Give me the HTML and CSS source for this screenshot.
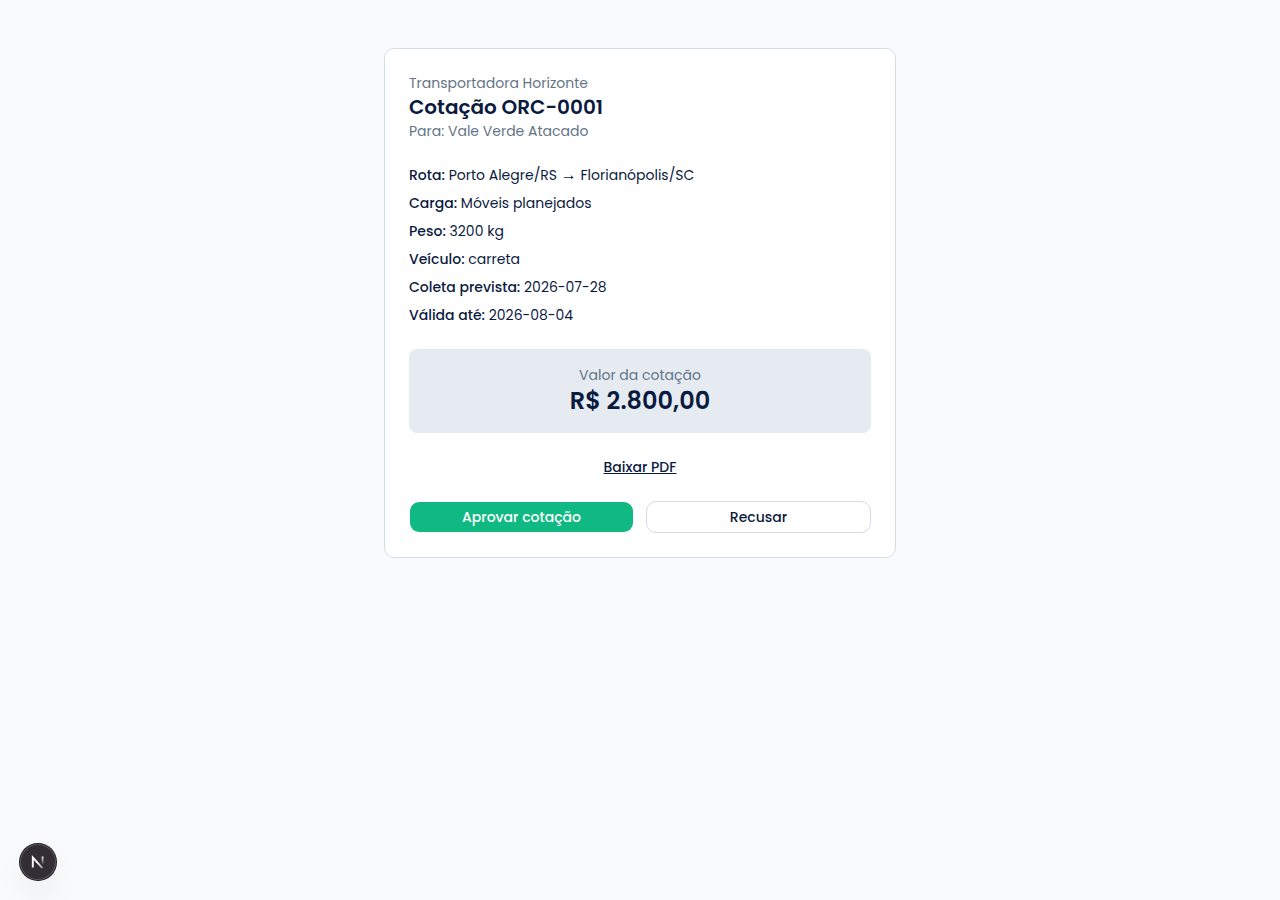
FILE: index.html
```html
<!DOCTYPE html>
<html lang="pt-BR">
<head>
    <meta charset="UTF-8">
    <meta name="viewport" content="width=device-width, initial-scale=1.0">
    <title>Cotação ORC-0001</title>
    <link rel="stylesheet" href="styles.css">
</head>
<body>

    <main class="card">
        <header>
            <p class="muted">Transportadora Horizonte</p>
            <h1>Cotação ORC-0001</h1>
            <p class="muted">Para: Vale Verde Atacado</p>
        </header>

        <div class="details">
            <p><strong>Rota:</strong> Porto Alegre/RS <span class="arrow">→</span> Florianópolis/SC</p>
            <p><strong>Carga:</strong> Móveis planejados</p>
            <p><strong>Peso:</strong> 3200 kg</p>
            <p><strong>Veículo:</strong> carreta</p>
            <p><strong>Coleta prevista:</strong> 2026-07-28</p>
            <p><strong>Válida até:</strong> 2026-08-04</p>
        </div>

        <div class="total">
            <p class="muted">Valor da cotação</p>
            <p class="price">R$ 2.800,00</p>
        </div>

        <a class="pdf" href="#">Baixar PDF</a>

        <div class="actions">
            <button type="button" class="btn approve">Aprovar cotação</button>
            <button type="button" class="btn refuse">Recusar</button>
        </div>
    </main>

    <button type="button" class="dev-badge" aria-label="Next.js">
        <svg width="36" height="36" viewBox="0 0 36 36" fill="none">
            <defs>
                <linearGradient id="diagonal" x1="18" y1="18" x2="23" y2="25" gradientUnits="userSpaceOnUse">
                    <stop stop-color="#fff"/>
                    <stop offset="1" stop-color="#fff" stop-opacity="0.4"/>
                </linearGradient>
                <linearGradient id="stem" x1="23" y1="12" x2="23" y2="21" gradientUnits="userSpaceOnUse">
                    <stop stop-color="#fff"/>
                    <stop offset="1" stop-color="#fff" stop-opacity="0"/>
                </linearGradient>
            </defs>
            <path d="M12.8 23.5V13.4L22.4 24.2" stroke="url(#diagonal)" stroke-width="1.9"/>
            <path d="M22.6 12.5V20.5" stroke="url(#stem)" stroke-width="1.8"/>
        </svg>
    </button>

</body>
</html>
```

FILE: styles.css
```css
* {
    box-sizing: border-box;
}
body {
    margin: 0;
    padding: 48px 16px;
    background: #f8fafc;
    color: #0b1b3f;
    font-family: Poppins, "Liberation Sans", sans-serif;
    font-size: 14px;
    line-height: 20px;
}
h1, p {
    margin: 0;
}
h1 {
    font-size: 20px;
    line-height: 28px;
    font-weight: 600;
}
strong {
    font-weight: 500;
}
.card {
    display: flex;
    flex-direction: column;
    gap: 24px;
    max-width: 512px;
    margin: 0 auto;
    padding: 24px;
    background: #fff;
    border: 1px solid #d3dce6;
    border-radius: 10px;
}
.muted {
    color: #647587;
}
.details {
    display: flex;
    flex-direction: column;
    gap: 8px;
}
.arrow {
    font-family: "Liberation Serif", serif;
    font-size: 16px;
    line-height: 1;
}
.total {
    padding: 16px;
    background: #e6ebf2;
    border-radius: 8px;
    text-align: center;
}
.price {
    font-size: 24px;
    line-height: 32px;
    font-weight: 600;
}
.pdf {
    align-self: center;
    color: inherit;
    font-weight: 500;
}
.actions {
    display: flex;
    gap: 12px;
}
.btn {
    flex: 1;
    height: 32px;
    padding: 0 10px;
    border: 1px solid transparent;
    border-radius: 10px;
    background-clip: padding-box;
    font: inherit;
    font-weight: 500;
    cursor: pointer;
}
.approve {
    background-color: #10b981;
    color: #fff;
}
.refuse {
    background-color: #fff;
    border-color: #d3dce6;
    color: inherit;
}
.dev-badge {
    position: fixed;
    left: 20px;
    bottom: 20px;
    display: grid;
    place-items: center;
    width: 36px;
    height: 36px;
    padding: 0;
    border: 0;
    border-radius: 50%;
    background: #332e35;
    box-shadow: inset 0 0 0 1px #5d555e, 0 0 0 1px #1c191d, 0 16px 32px -8px rgba(0, 0, 0, 0.16);
}
```
